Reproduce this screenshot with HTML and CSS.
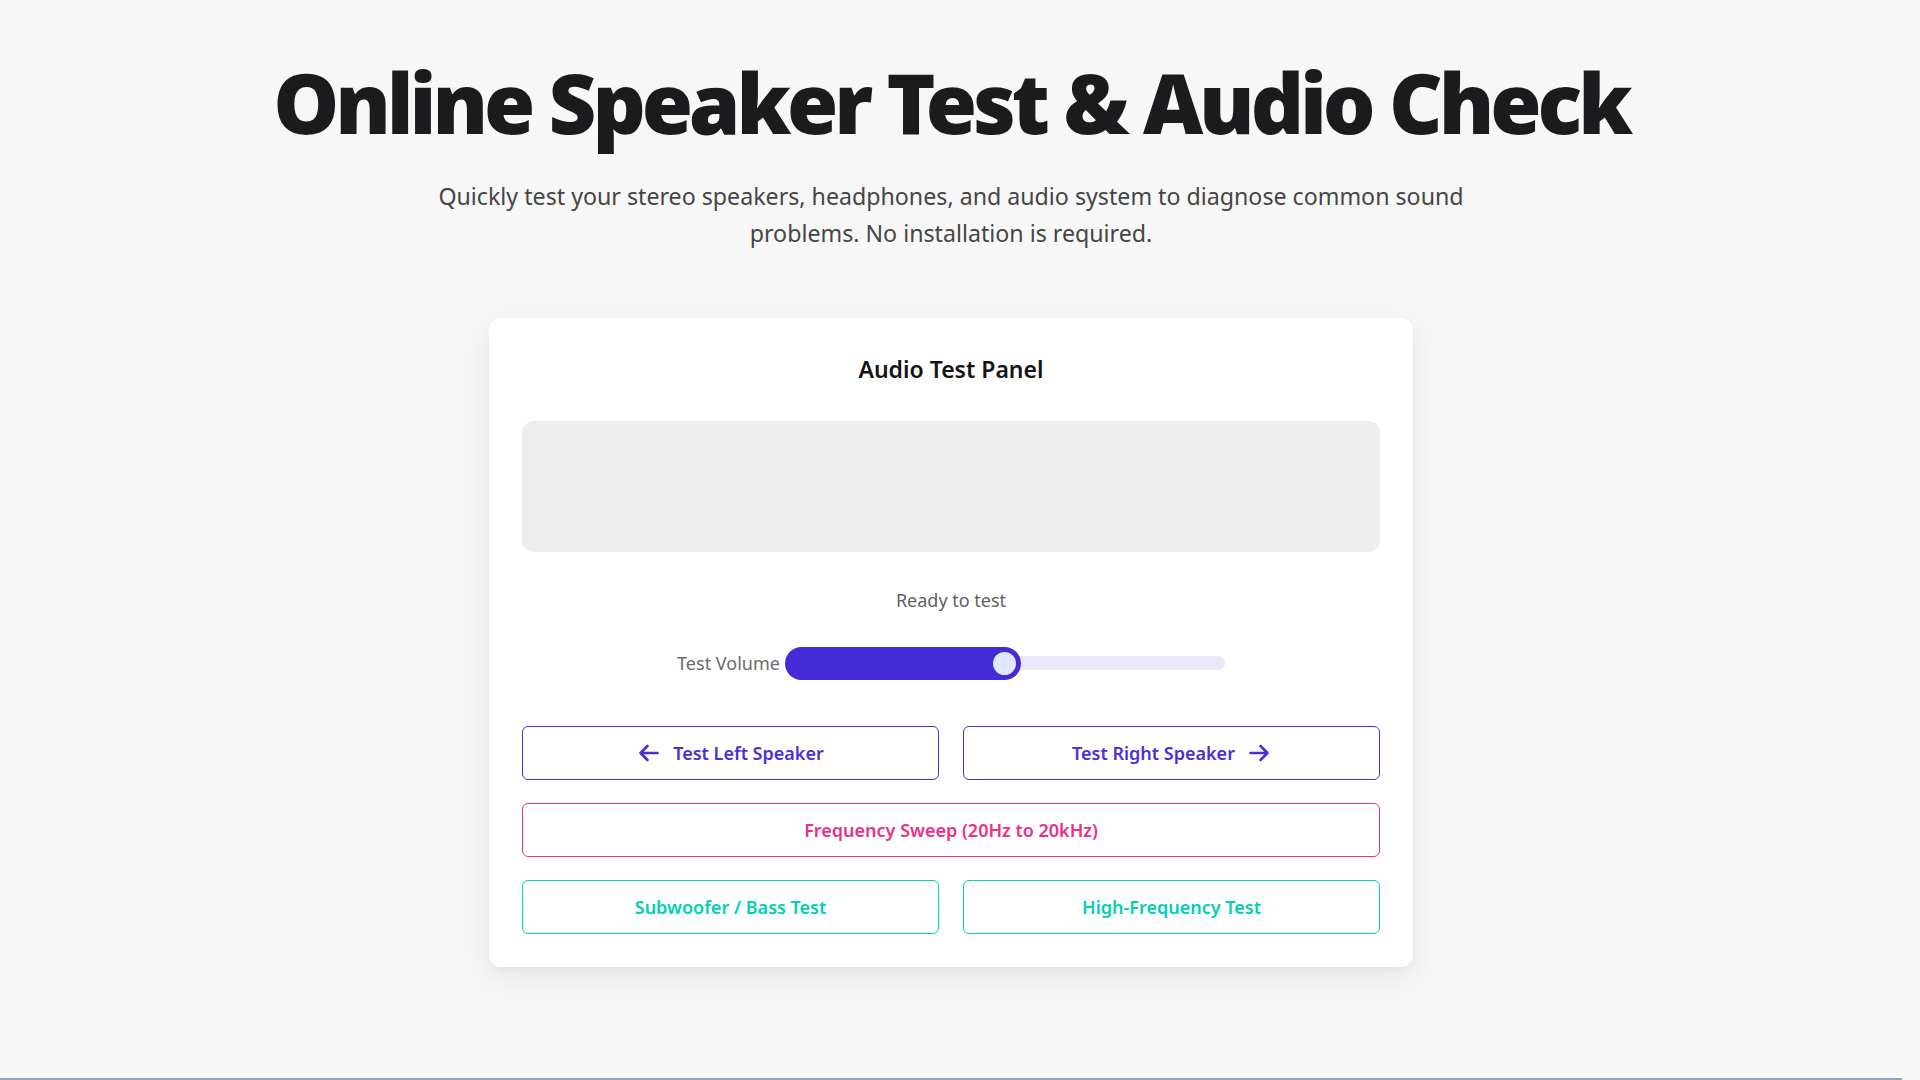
FILE: index.html
```html
<!DOCTYPE html>
<html lang="en">
<head>
<meta charset="utf-8">
<title>Online Speaker Test &amp; Audio Check</title>
<link rel="stylesheet" href="styles.css">
</head>
<body>
<main class="page">
  <header class="hero">
    <h1 class="hero-title">Online Speaker Test &amp; Audio Check</h1>
    <p class="hero-sub">Quickly test your stereo speakers, headphones, and audio system to diagnose common sound problems. No installation is required.</p>
  </header>

  <section class="panel">
    <h2 class="panel-title">Audio Test Panel</h2>
    <div class="visualizer"></div>
    <p class="status">Ready to test</p>
    <div class="volume">
      <span class="volume-label">Test Volume</span>
      <div class="slider">
        <div class="slider-track">
          <div class="slider-fill" style="width: 53.6%"><span class="slider-thumb"></span></div>
        </div>
      </div>
    </div>
    <div class="actions">
      <button class="btn btn-purple" type="button">
        <svg class="btn-icon" viewBox="0 0 24 24" fill="none" stroke="currentColor" stroke-width="2.6" stroke-linecap="round" stroke-linejoin="round"><path d="M20.5 12H3.5M10.5 5l-7 7 7 7"/></svg>
        <span>Test Left Speaker</span>
      </button>
      <button class="btn btn-purple" type="button">
        <span>Test Right Speaker</span>
        <svg class="btn-icon" viewBox="0 0 24 24" fill="none" stroke="currentColor" stroke-width="2.6" stroke-linecap="round" stroke-linejoin="round"><path d="M3.5 12h17M13.5 5l7 7-7 7"/></svg>
      </button>
      <button class="btn btn-pink btn-wide" type="button"><span>Frequency Sweep (20Hz to 20kHz)</span></button>
      <button class="btn btn-teal" type="button"><span>Subwoofer / Bass Test</span></button>
      <button class="btn btn-teal" type="button"><span>High-Frequency Test</span></button>
    </div>
  </section>
</main>
<section class="more"></section>
</body>
</html>
```
FILE: styles.css
```css
* { box-sizing: border-box; }

html, body {
  margin: 0;
  padding: 0;
}

body {
  padding-right: 18px;
  background: #f7f7f7;
  color: #1c1c1f;
  font-family: "Noto Sans", "Open Sans", "Liberation Sans", sans-serif;
}

.page {
  display: flex;
  flex-direction: column;
  align-items: center;
  padding: 52px 24px 111px;
}

.hero {
  display: flex;
  flex-direction: column;
  align-items: center;
  text-align: center;
}

.hero-title {
  margin: 0;
  font-size: 83px;
  line-height: 1.2;
  font-weight: 900;
  letter-spacing: -4.1px;
  color: #1b1b1e;
  white-space: nowrap;
}

.hero-sub {
  margin: 26px 0 0;
  max-width: 1070px;
  font-size: 23.2px;
  line-height: 37px;
  font-weight: 400;
  color: #454545;
}

.panel {
  margin-top: 66px;
  width: 924px;
  padding: 33px;
  background: #ffffff;
  border-radius: 12px;
  box-shadow: 0 10px 30px rgba(0, 0, 0, 0.08), 0 2px 6px rgba(0, 0, 0, 0.03);
  display: flex;
  flex-direction: column;
  align-items: stretch;
}

.panel-title {
  margin: 0 0 34px;
  text-align: center;
  font-size: 23px;
  line-height: 36px;
  font-weight: 600;
  color: #141416;
}

.visualizer {
  height: 131px;
  background: #ededed;
  border-radius: 12px;
}

.status {
  margin: 35px 0 0;
  text-align: center;
  font-size: 18px;
  line-height: 27px;
  color: #5f5f5f;
}

.volume {
  margin-top: 33px;
  display: flex;
  justify-content: center;
  align-items: center;
  gap: 5px;
}

.volume-label {
  font-size: 18px;
  line-height: 27px;
  color: #6b6b6b;
}

.slider {
  height: 33px;
  display: flex;
  align-items: center;
}

.slider-track {
  width: 440px;
  height: 14px;
  background: #e9e7f8;
  border-radius: 7px;
  display: flex;
  align-items: center;
}

.slider-fill {
  flex: none;
  height: 33px;
  padding: 5px;
  background: #432bd5;
  border-radius: 17px;
  display: flex;
  justify-content: flex-end;
  align-items: center;
}

.slider-thumb {
  width: 23px;
  height: 23px;
  border-radius: 50%;
  background: #e1e6fb;
}

.actions {
  margin-top: 46px;
  display: grid;
  grid-template-columns: 1fr 1fr;
  gap: 23px 24px;
}

.btn {
  height: 54px;
  display: flex;
  justify-content: center;
  align-items: center;
  gap: 12px;
  background: #ffffff;
  border: 1px solid currentColor;
  border-radius: 6px;
  font-family: inherit;
  font-size: 18px;
  font-weight: 600;
  line-height: 24px;
  cursor: pointer;
}

.btn-wide { grid-column: 1 / -1; }

.btn-purple { color: #4a2fd9; }
.btn-pink { color: #ec2f87; }
.btn-teal { color: #00d1b2; }

.btn-icon {
  width: 24px;
  height: 24px;
  flex: none;
}

.more {
  min-height: 1692px;
  border-top: 2px solid #94a3b8;
  background: #f7f7f7;
}
```
